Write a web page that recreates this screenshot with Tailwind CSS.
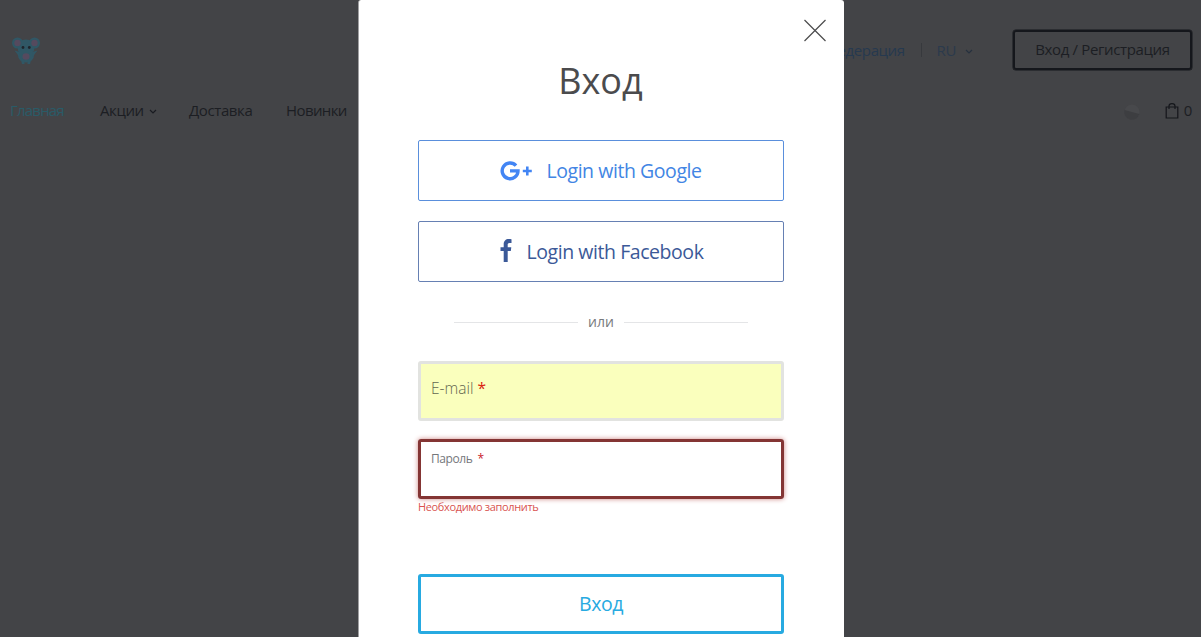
<!DOCTYPE html>
<html lang="ru">
<head>
<meta charset="utf-8">
<title>Вход</title>
<script src="https://cdn.jsdelivr.net/npm/@tailwindcss/browser@4"></script>
</head>
<body class="h-[637px] overflow-hidden bg-[#434447] font-['Open_Sans','Noto_Sans',sans-serif]">
<div class="relative h-[637px] overflow-hidden">
<header class="text-[15px] leading-5 tracking-[-0.4px] text-[#1c1e23]">
  <div class="flex h-[100px] items-center justify-between pl-[11px] pr-[9px]">
    <svg class="mt-0.5 h-[30px] w-[30px]" viewBox="0 0 30 30">
      <g fill="#305765"><circle cx="6.500" cy="7" r="5.500"/><circle cx="23.500" cy="7" r="5.500"/><ellipse cx="15" cy="11.500" rx="8.500" ry="8"/><ellipse cx="15" cy="19.500" rx="8" ry="7"/><path d="M3.500 14.500l5 1.500v5zM26.500 14.500l-5 1.500v5zM10 24h3.500v4H11zM16.500 24H20l-1 4h-2.500z"/></g>
      <g fill="#554a5e"><circle cx="6.500" cy="7" r="3.200"/><circle cx="23.500" cy="7" r="3.200"/><ellipse cx="15" cy="20.500" rx="3.500" ry="3.200"/></g>
      <circle cx="12" cy="11.500" r="1.400" fill="#20252c"/><circle cx="18.300" cy="11.500" r="1.400" fill="#20252c"/>
    </svg>
    <div class="flex items-center">
      <span class="text-[#26394f]">Российская Федерация</span>
      <span class="ml-4 h-3.5 w-px bg-[#37393d]"></span>
      <span class="ml-[15px] text-[#2b3a4c]">RU</span>
      <svg class="ml-[9px] mr-10 mt-0.5 h-2 w-2" viewBox="0 0 8 8" fill="none" stroke="#26313f" stroke-width="1.200"><path d="M1 3l3 3 3-3"/></svg>
      <button class="h-10 w-[179px] rounded-[3px] border-2 border-[#15171c] pb-0.5 text-[15px] tracking-[-0.36px] shadow-[0_0_0_0.500px_#15171c]">Вход / Регистрация</button>
    </div>
  </div>
  <nav class="flex h-5 items-center pl-2.5 pr-[9px]">
    <a class="w-[90px] tracking-[-0.8px] text-[#2a5b67]">Главная</a>
    <a class="flex w-[89px] items-center">Акции<svg class="ml-[5px] mt-1 h-2 w-2" viewBox="0 0 8 8" fill="none" stroke="#191b21" stroke-width="1.200"><path d="M1 2l3 3 3-3"/></svg></a>
    <a class="w-[97px]">Доставка</a>
    <a class="tracking-[-0.6px]">Новинки</a>
    <svg class="ml-auto mt-1 h-4 w-4" viewBox="0 0 16 16"><circle cx="8" cy="8" r="7.500" fill="#48494c"/><path d="M.500 6L15.300 10A7.500 7.500 0 0 1 .500 6" fill="#3d3e41"/></svg>
    <svg class="ml-[25px] mt-0.5 h-4 w-3.5" viewBox="0 0 14 16" fill="none" stroke="#14161b" stroke-width="1.200"><path d="M1.200 4h11.600v11H1.200zM4 6V3a3 2.300 0 0 1 6 0v3"/></svg>
    <span class="ml-[5px]">0</span>
  </nav>
</header>

<main class="absolute left-[358px] top-0 flex h-[637px] w-[486px] flex-col rounded-t-[3px] border-l border-[#a0a0a2] bg-white px-[59px]">
  <button class="absolute right-[17px] top-[19px]" aria-label="Закрыть">
    <svg class="h-6 w-6" viewBox="0 0 24 24" fill="none" stroke="#4b4b4d" stroke-width="1.200"><path d="M1.500 1l21 21M22.500 1l-21 21"/></svg>
  </button>
  <h1 class="mt-[54px] h-[54px] pr-0.5 text-center text-[36px] leading-[54px] text-[#4b4b4d]">Вход</h1>
  <button class="mt-8 flex h-[61px] w-[366px] shrink-0 items-center justify-center rounded-[2px] border border-[#5a8fdc] text-[19.500px] tracking-[-0.44px] text-[#4285e4]">
    <svg class="mr-3.5 h-5 w-8" viewBox="0 0 32 20"><path d="M16 4.600A7.900 7.900 0 1 0 18 9.900H10" fill="none" stroke="#4285f4" stroke-width="3.400"/><path d="M27.300 5.500v9M22.800 10h9" fill="none" stroke="#4285f4" stroke-width="2.600"/></svg>
    <span>Login with Google</span>
  </button>
  <button class="mt-5 flex h-[61px] w-[366px] shrink-0 items-center justify-center rounded-[2px] border border-[#6680b3] pl-px text-[19.500px] tracking-[-0.44px] text-[#3b5998]">
    <svg class="mb-0.5 mr-[15px] h-[23px] w-3" viewBox="0 0 12 23" fill="#3b5998"><path d="M11.500.200v3.700H9.600C8 3.900 7.700 4.600 7.700 5.700v2.500h3.600l-.500 3.700H7.700V23H3.700V11.900H.500V8.200h3.200V5.300C3.700 2 5.700 0 8.700 0c1.400 0 2.400.1 2.800.2z"/></svg>
    <span>Login with Facebook</span>
  </button>
  <div class="mt-[30px] flex h-5 items-center gap-2.5 pl-9 pr-[37px] text-sm leading-5 text-[#77797c]">
    <span class="h-px flex-1 bg-[#e4e5e7]"></span><span>или</span><span class="h-px flex-1 bg-[#e4e5e7]"></span>
  </div>
  <div class="mt-[29px] flex h-[60px] w-[366px] shrink-0 items-center rounded-[3px] border-3 border-[#e2e3e0] bg-[#faffbd] pb-1 pl-2.5 text-[15.500px] font-light text-[#62664f]">E-mail<span class="ml-1 font-normal text-[#d9230f]">*</span></div>
  <div class="mt-[18px] h-[60px] w-[366px] shrink-0 rounded-[3px] border-3 border-[#843534] pl-2.5 pt-2 text-xs leading-[18px] tracking-[-0.4px] text-[#75777b] shadow-[0_0_5px_#ce8483]">Пароль<span class="ml-[5px] text-[#c9202b]">*</span></div>
  <p class="h-4 text-[11px] leading-4 tracking-[-0.35px] text-[#d9534f]">Необходимо заполнить</p>
  <button class="mt-[59px] h-[60px] w-[366px] shrink-0 rounded-[3px] border-3 border-[#27aae1] text-[19.500px] tracking-[-0.44px] text-[#27aae1]">Вход</button>
</main>
</div>
</body>
</html>
